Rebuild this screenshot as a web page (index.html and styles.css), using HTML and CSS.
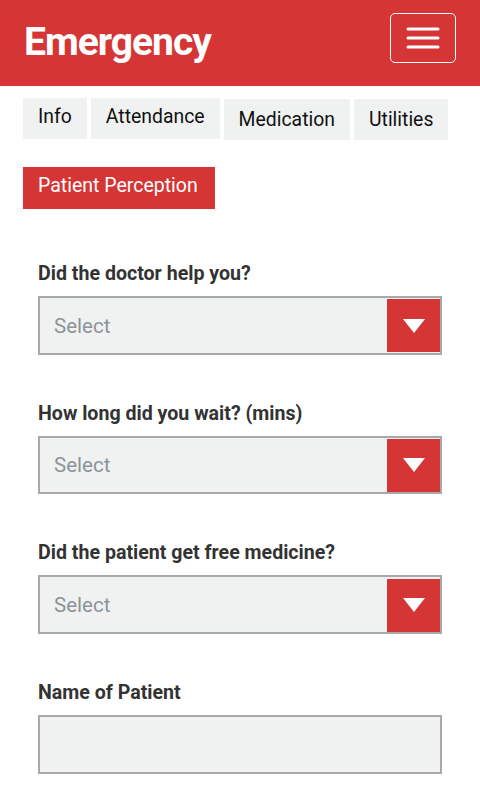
FILE: index.html
```html
<!DOCTYPE html>
<html>
<head>
<meta charset="utf-8">
<link rel="stylesheet" href="styles.css">
</head>
<body>
<header class="topbar">
  <h1 class="title">Emergency</h1>
  <button class="menu-btn" aria-label="Menu">
    <svg width="34" height="22" viewBox="0 0 34 22"><g stroke="#fff" stroke-width="3" stroke-linecap="round"><line x1="2" y1="2" x2="32" y2="2"/><line x1="2" y1="11" x2="32" y2="11"/><line x1="2" y1="20" x2="32" y2="20"/></g></svg>
  </button>
</header>
<nav class="tabs">
  <span class="tab">Info</span>
  <span class="tab">Attendance</span>
  <span class="tab tab-low">Medication</span>
  <span class="tab tab-low">Utilities</span>
</nav>
<div class="sub">
  <span class="sub-btn">Patient Perception</span>
</div>
<main class="form">
  <div class="field">
    <label class="label">Did the doctor help you?</label>
    <div class="select"><span class="placeholder">Select</span><span class="arrow"><svg width="22" height="14" viewBox="0 0 22 14"><polygon points="0,0 22,0 11,14" fill="#fff"/></svg></span></div>
  </div>
  <div class="field">
    <label class="label">How long did you wait? (mins)</label>
    <div class="select"><span class="placeholder">Select</span><span class="arrow"><svg width="22" height="14" viewBox="0 0 22 14"><polygon points="0,0 22,0 11,14" fill="#fff"/></svg></span></div>
  </div>
  <div class="field">
    <label class="label">Did the patient get free medicine?</label>
    <div class="select"><span class="placeholder">Select</span><span class="arrow"><svg width="22" height="14" viewBox="0 0 22 14"><polygon points="0,0 22,0 11,14" fill="#fff"/></svg></span></div>
  </div>
  <div class="field">
    <label class="label">Name of Patient</label>
    <div class="input"></div>
  </div>
</main>
</body>
</html>
```
FILE: styles.css
```css
* { box-sizing: border-box; }
html, body { margin: 0; padding: 0; background: #fff; }
body { font-family: Roboto, "Noto Sans", sans-serif; color: #222; width: 480px; overflow: hidden; }

.topbar {
  height: 86px;
  background: #d63535;
  display: flex;
  align-items: center;
  justify-content: space-between;
  padding: 0 24px 0 24px;
}
.title {
  margin: 0;
  color: #fff;
  font-size: 39px;
  font-weight: 700;
  letter-spacing: -1px;
  line-height: 1;
  padding-bottom: 2px;
}
.menu-btn {
  width: 66px;
  height: 50px;
  margin-top: -10px;
  border: 1.5px solid #fff;
  border-radius: 5px;
  background: transparent;
  display: flex;
  align-items: center;
  justify-content: center;
  padding: 0;
}

.tabs {
  display: flex;
  gap: 4px;
  padding: 12px 0 0 23px;
  align-items: flex-start;
}
.tab {
  background: #f0f1f1;
  height: 41px;
  padding: 0 15px;
  font-size: 19.4px;
  line-height: 38px;
  color: #111;
}
.tab-low { margin-top: 1px; line-height: 41px; }

.sub { padding: 27px 0 0 23px; }
.sub-btn {
  display: inline-block;
  background: #d63535;
  color: #fff;
  height: 42px;
  line-height: 38px;
  padding: 0 17px 0 15px;
  font-size: 19.5px;
}

.form { padding: 53px 38px 0 38px; display: flex; flex-direction: column; gap: 47.2px; }
.field { display: flex; flex-direction: column; gap: 10px; }
.label { font-size: 19.6px; font-weight: 700; color: #333; line-height: 24px; }
.select, .input {
  height: 58.5px;
  background: #f0f1f1;
  border: 2px solid #a9a9a9;
  display: flex;
  align-items: center;
}
.select { padding: 1px 0 0 14px; justify-content: space-between; }
.placeholder { font-size: 20.5px; color: #8b9599; }
.arrow {
  width: 53px;
  height: 53px;
  background: #d63535;
  display: flex;
  align-items: center;
  justify-content: center;
}
```
